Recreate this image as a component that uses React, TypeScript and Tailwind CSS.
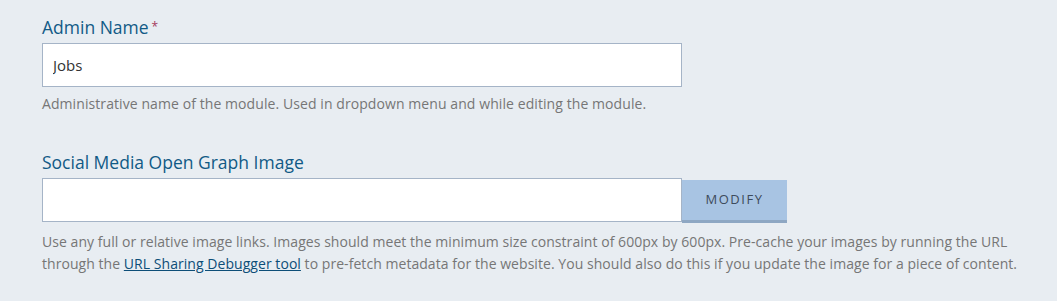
const fontStack = { fontFamily: '"Open Sans", "Noto Sans", sans-serif' };

export default function App() {
  return (
    <div className="min-h-[301px] w-full bg-[#e8edf2] pl-[42px] pr-[8px] pt-[15px]" style={fontStack}>
      <div className="mb-[35px]">
        <label className="block text-[17.5px] leading-[24px] text-[#115a86]">
          Admin Name<span className="ml-[3px] align-top text-[12px] text-[#a5395c]">*</span>
        </label>
        <input
          defaultValue="Jobs"
          className="mt-[4px] block h-[44px] w-[640px] border border-[#a5b4c7] bg-white px-[10px] text-[15px] text-[#333] outline-none"
        />
        <p className="mt-[6px] text-[14px] leading-[22px] tracking-[0.08px] text-[#767676]">
          Administrative name of the module. Used in dropdown menu and while editing the module.
        </p>
      </div>
      <div>
        <label className="block text-[17.5px] leading-[24px] text-[#115a86]">Social Media Open Graph Image</label>
        <div className="mt-[4px] flex items-start">
          <input className="block h-[44px] w-[640px] border border-[#a5b4c7] bg-white px-[10px] text-[15px] outline-none" />
          <button className="mt-[2px] h-[43px] w-[105px] border-b-[3px] border-[#8ea7c3] bg-[#a8c4e3] text-[13px] tracking-[1.5px] text-[#3d4b5c]">
            MODIFY
          </button>
        </div>
        <p className="mt-[8px] text-[14px] leading-[22px] tracking-[0.05px] text-[#767676]">
          Use any full or relative image links. Images should meet the minimum size constraint of 600px by 600px. Pre-cache your images by running the URL through the{' '}
          <a href="#" className="text-[#0d4e78] underline">URL Sharing Debugger tool</a> to pre-fetch metadata for the website. You should also do this if you update the image for a piece of content.
        </p>
      </div>
    </div>
  );
}
